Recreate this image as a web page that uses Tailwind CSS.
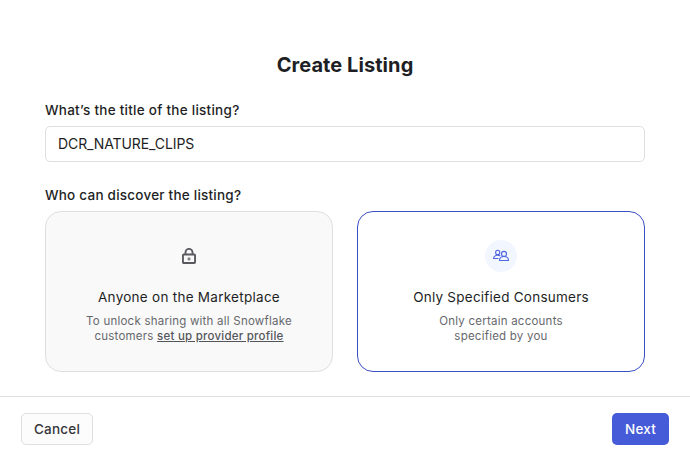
<!DOCTYPE html>
<html lang="en"><head><meta charset="utf-8"><title>Create Listing</title>
<script src="https://cdn.jsdelivr.net/npm/@tailwindcss/browser@4"></script></head>
<body class="h-[458px] w-[690px] overflow-hidden bg-white font-['Inter',sans-serif] text-[#1e1f25]">
<div class="flex h-full flex-col">
<main class="flex h-[396px] flex-col px-[45px] pt-[51px]">
<h1 class="text-center text-[20px] leading-7 font-bold tracking-[0.07px]">Create Listing</h1>
<label class="mt-[21px] text-[13.5px] leading-5 font-medium tracking-[0.26px]">What’s the title of the listing?</label>
<div class="mt-[6px] flex h-9 items-center rounded-[5px] border border-[#dedfe0] px-3 pb-px text-[14px] tracking-[-0.1px]">DCR_NATURE_CLIPS</div>
<p class="mt-[23px] text-[13.5px] leading-5 font-medium tracking-[0.23px]">Who can discover the listing?</p>
<div class="mt-[6px] grid grid-cols-2 gap-6">
<section class="flex h-[161px] flex-col items-center rounded-[16px] border border-[#dedfe0] bg-[#f9f9f9] pt-7 text-center">
<div class="flex size-8 items-center justify-center"><svg class="size-4" viewBox="0 0 16 16" fill="none" stroke="#5b5a60" stroke-width="1.9"><rect x="1.950" y="6.500" width="12.100" height="8.550" rx=".8"/><path d="M4.500 6.500V4.400a3.500 3.500 0 0 1 7 0v2.100"/><circle cx="8" cy="10.900" r="1.600" fill="#85848a" stroke="none"/></svg></div>
<h2 class="mt-[15px] text-[13.5px] leading-5 tracking-[0.27px]">Anyone on the Marketplace</h2>
<p class="mt-[7px] text-[11.5px] leading-[15px] tracking-[0.23px] text-[#67686c]">To unlock sharing with all Snowflake<br>customers <span class="font-medium text-[#55565b] underline">set up provider profile</span></p>
</section>
<section class="flex h-[161px] flex-col items-center rounded-[16px] border border-[#3c4fc4] bg-white pt-7 text-center">
<div class="flex size-8 items-center justify-center rounded-full bg-[#f1f6ff]"><svg class="size-4 overflow-visible" viewBox="0 0 16 16" fill="none" stroke="#5067df" stroke-width="1.1"><circle cx="4.700" cy="4.400" r="2.100"/><circle cx="11" cy="5.900" r="2.500"/><path d="M6.500 12.500c0-5.300 9-5.300 9 0zM7.200 7.800C4.300 6.200.5 7.500.5 10.500H5.500"/></svg></div>
<h2 class="mt-[15px] text-[13.5px] leading-5 tracking-[0.24px]">Only Specified Consumers</h2>
<p class="mt-[7px] text-[11.5px] leading-[15px] tracking-[0.23px] text-[#67686c]">Only certain accounts<br>specified by you</p>
</section>
</div></main>
<footer class="flex h-[62px] items-start justify-between border-t border-[#dedfe0] px-[21px] pt-4">
<button class="h-8 w-[72px] rounded-[5px] border border-[#dedfe0] bg-[#fcfcfc] pt-px text-[13.5px] font-medium tracking-[0.2px] text-[#36363a]">Cancel</button>
<button class="h-8 w-[57px] rounded-[5px] bg-[#465bd8] pt-px text-[13.5px] font-medium tracking-[0.2px] text-white">Next</button>
</footer></div></body></html>
